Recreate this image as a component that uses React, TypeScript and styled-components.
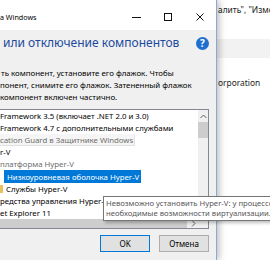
import styled, { createGlobalStyle, css } from "styled-components";

const GlobalStyle = createGlobalStyle`
    html, body {
        margin: 0;
        padding: 0;
        background: #ffffff;
    }
    body {
        width: 270px;
        height: 260px;
        overflow: hidden;
        font-family: "Noto Sans", "Open Sans", sans-serif;
    }
`;

interface Feature {
    label: string;
    indent?: number;
    muted?: boolean;
    hover?: boolean;
    selected?: boolean;
    mark?: string;
}

const features: Feature[] = [
    { label: "Framework 3.5 (включает .NET 2.0 и 3.0)" },
    { label: "Framework 4.7 с дополнительными службами" },
    { label: "cation Guard в Защитнике Windows", muted: true, hover: true },
    { label: "r-V" },
    { label: "платформа Hyper-V", muted: true },
    { label: "Низкоуровневая оболочка Hyper-V", indent: 4, selected: true },
    { label: "Службы Hyper-V", indent: 3, mark: "#e7c25d" },
    { label: "редства управления Hyper-V" },
    { label: "et Explorer 11" },
];

const description = [
    { text: "ть компонент, установите его флажок. Чтобы", indent: 1 },
    { text: "понент, снимите его флажок. Затененный флажок", indent: 0 },
    { text: "компонент включен частично.", indent: 0 },
];

const App = () => {
    return (
        <Screen>
            <GlobalStyle />
            <Dialog>
                <TitleBar>
                    <Title>а Windows</Title>
                    <Controls>
                        <ControlButton>
                            <svg width="9" height="9" viewBox="0 0 9 9">
                                <line x1="0" y1="4.5" x2="9" y2="4.5" stroke="#111" />
                            </svg>
                        </ControlButton>
                        <ControlButton>
                            <svg width="8" height="8" viewBox="0 0 8 8">
                                <rect x="0.5" y="0.5" width="7" height="7" fill="none" stroke="#111" />
                            </svg>
                        </ControlButton>
                        <ControlButton>
                            <svg width="8" height="8" viewBox="0 0 8 8">
                                <path d="M0.5 0.5 L7.5 7.5 M7.5 0.5 L0.5 7.5" stroke="#111" />
                            </svg>
                        </ControlButton>
                    </Controls>
                </TitleBar>

                <Body>
                    <HeaderRow>
                        <Heading>или отключение компонентов</Heading>
                        <svg width="13" height="13" viewBox="0 0 13 13">
                            <circle cx="6.5" cy="6.5" r="6.5" fill="#1f6fd1" />
                            <text
                                x="6.5"
                                y="10"
                                textAnchor="middle"
                                fontSize="10"
                                fontWeight="700"
                                fill="#ffffff"
                                fontFamily="Noto Sans, sans-serif"
                            >
                                ?
                            </text>
                        </svg>
                    </HeaderRow>

                    <Description>
                        {description.map((line) => (
                            <DescLine key={line.text} $indent={line.indent}>
                                {line.text}
                            </DescLine>
                        ))}
                    </Description>

                    <ListBox>
                        <Items>
                            {features.map((f) => (
                                <Row key={f.label} $indent={f.indent ?? 0}>
                                    {f.mark && <Mark $color={f.mark} />}
                                    <Label
                                        $muted={f.muted}
                                        $hover={f.hover}
                                        $selected={f.selected}
                                    >
                                        {f.label}
                                    </Label>
                                </Row>
                            ))}
                        </Items>
                        <VScroll>
                            <ArrowBox>
                                <svg width="7" height="5" viewBox="0 0 7 5">
                                    <path d="M0.5 4 L3.5 1 L6.5 4" fill="none" stroke="#606060" />
                                </svg>
                            </ArrowBox>
                            <VThumb />
                        </VScroll>
                        <HScroll>
                            <HThumb />
                            <HArrow>
                                <svg width="5" height="7" viewBox="0 0 5 7">
                                    <path d="M1 0.5 L4 3.5 L1 6.5" fill="none" stroke="#606060" />
                                </svg>
                            </HArrow>
                        </HScroll>
                        <Corner />
                    </ListBox>

                    <Buttons>
                        <Button $primary>OK</Button>
                        <Button>Отмена</Button>
                    </Buttons>
                </Body>
            </Dialog>

            <BackWindow>
                <BackText>алить", "Изменить"</BackText>
                <BackBand />
                <BackText $gap={19}>orporation</BackText>
            </BackWindow>

            <Tooltip>
                <span>Невозможно установить Hyper-V: у процессора</span>
                <span>необходимые возможности виртуализации.</span>
            </Tooltip>
        </Screen>
    );
};

const Screen = styled.div`
    position: relative;

    display: flex;

    width: 270px;
    height: 260px;

    overflow: hidden;

    color: #000;
    background: #ffffff;
`;

const Dialog = styled.div`
    position: relative;
    z-index: 1;

    display: flex;
    flex-direction: column;
    flex: none;

    width: 216px;
    height: 260px;

    background: #f0f0f0;
    border-right: 1px solid #8aaad2;
    box-shadow: 2px 0 7px rgba(0, 0, 0, 0.28);
`;

const TitleBar = styled.div`
    display: flex;
    align-items: center;

    height: 30px;

    background: #ffffff;
`;

const Title = styled.span`
    padding-top: 4px;

    font-size: 7.2px;
    white-space: nowrap;
`;

const Controls = styled.div`
    display: flex;

    margin-left: auto;
    padding-top: 4px;
`;

const ControlButton = styled.div`
    display: flex;
    justify-content: center;
    align-items: center;

    width: 32px;
    height: 22px;
`;

const Body = styled.div`
    display: flex;
    flex-direction: column;
    flex: 1;

    padding-right: 7px;
`;

const HeaderRow = styled.div`
    display: flex;
    justify-content: space-between;
    align-items: center;

    margin-top: 5px;
    padding-left: 3px;
`;

const Heading = styled.span`
    font-size: 12px;
    line-height: 16px;
    color: #1b4a9e;
    white-space: nowrap;
`;

const Description = styled.div`
    display: flex;
    flex-direction: column;

    margin-top: 16px;
`;

const DescLine = styled.div<{ $indent: number }>`
    padding-left: ${(p) => p.$indent}px;

    font-size: 7.9px;
    line-height: 12px;
    white-space: nowrap;
`;

const ListBox = styled.div`
    display: grid;
    grid-template-columns: 1fr 10px;
    grid-template-rows: 109px 9px;

    margin-top: 6px;

    background: #ffffff;
    border: 1px solid #828790;
    border-left: none;
`;

const Items = styled.div`
    display: flex;
    flex-direction: column;

    overflow: hidden;
`;

const Row = styled.div<{ $indent: number }>`
    display: flex;
    align-items: center;

    height: 12.1px;
    padding-left: ${(p) => p.$indent}px;

    font-size: 7.8px;
    white-space: nowrap;
`;

const Mark = styled.span<{ $color: string }>`
    width: 3px;
    height: 8px;
    margin-left: -3px;
    margin-right: 3px;

    background: ${(p) => p.$color};
`;

const Label = styled.span<{ $muted?: boolean; $hover?: boolean; $selected?: boolean }>`
    display: flex;
    align-items: center;

    height: 100%;

    color: ${(p) => (p.$muted ? "#6d6d6d" : "#000")};

    ${(p) =>
        p.$hover &&
        css`
            background: #f5f5f5;
            box-shadow: inset -1px -1px 0 #e2e2e2;
            padding-right: 2px;
        `}

    ${(p) =>
        p.$selected &&
        css`
            padding: 0 2px 0 3px;
            color: #ffffff;
            background: #0078d7;
        `}
`;

const VScroll = styled.div`
    display: flex;
    flex-direction: column;

    background: #f0f0f0;
`;

const ArrowBox = styled.div`
    display: flex;
    justify-content: center;
    align-items: center;

    height: 12px;
`;

const VThumb = styled.div`
    height: 16px;

    background: #cdcdcd;
`;

const HScroll = styled.div`
    display: flex;
    align-items: stretch;

    background: #f0f0f0;
`;

const HThumb = styled.div`
    width: 187px;

    background: #cdcdcd;
`;

const HArrow = styled.div`
    display: flex;
    justify-content: flex-end;
    align-items: center;

    flex: 1;
    padding-right: 2px;
`;

const Corner = styled.div`
    background: #f0f0f0;
`;

const Buttons = styled.div`
    display: flex;
    justify-content: flex-end;
    gap: 9px;

    margin-top: 6px;
`;

const Button = styled.div<{ $primary?: boolean }>`
    display: flex;
    justify-content: center;
    align-items: center;

    box-sizing: border-box;
    width: 50px;
    height: 17px;

    font-size: 8px;

    background: #e1e1e1;
    border: 1px solid ${(p) => (p.$primary ? "#0078d7" : "#adadad")};
`;

const BackWindow = styled.div`
    display: flex;
    flex-direction: column;
    flex: 1;

    padding-top: 4px;
`;

const BackText = styled.div<{ $gap?: number }>`
    margin-top: ${(p) => p.$gap ?? 0}px;
    padding-left: 1px;

    font-size: 8.4px;
    line-height: 12px;
    color: #222;
    white-space: nowrap;
`;

const BackBand = styled.div`
    height: 19px;
    margin-top: 23px;

    background: #f2f2f2;
`;

const Tooltip = styled.div`
    position: absolute;
    left: 103px;
    top: 196px;
    z-index: 2;

    display: flex;
    flex-direction: column;

    width: 190px;
    padding: 1px 3px 2px 2px;

    font-size: 7.7px;
    line-height: 10px;
    color: #575757;
    white-space: nowrap;

    background: #ffffff;
    border: 1px solid #767676;
    box-shadow: 2px 2px 3px rgba(0, 0, 0, 0.25);
`;

export default App;
